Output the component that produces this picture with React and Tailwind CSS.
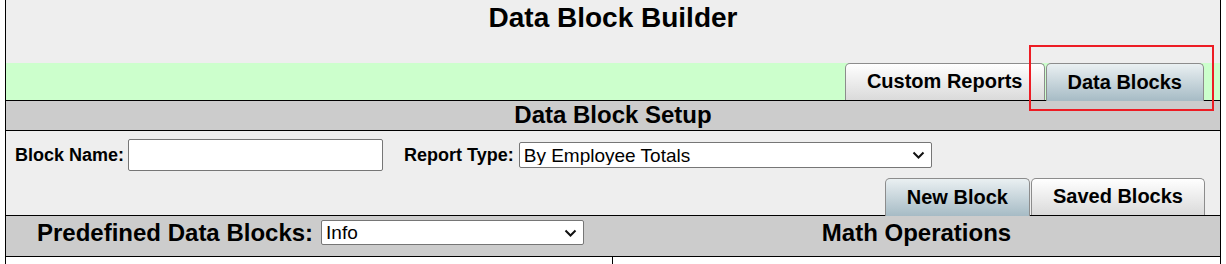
import React from 'react'

const Chevron = () => (
  <svg
    className="absolute right-[7px] top-1/2 -translate-y-1/2 pointer-events-none"
    width="13"
    height="8"
    viewBox="0 0 13 8"
    fill="none"
  >
    <path d="M1.5 1.5 L6.5 6.5 L11.5 1.5" stroke="#111" strokeWidth="2" />
  </svg>
)

const Tab = ({ label, active }) => (
  <div
    className={`flex items-center justify-center px-[21px] pb-[2px] border border-b-0 border-[#8c8c8c] rounded-t-[5px] text-[20px] font-bold text-black ${
      active
        ? 'h-[38px] -mb-px relative bg-gradient-to-b from-[#eaf0f2] to-[#a6bbc5]'
        : 'h-[37px] bg-gradient-to-b from-white to-[#dadada]'
    }`}
  >
    {label}
  </div>
)

const Select = ({ value, className }) => (
  <div className={`relative ${className}`}>
    <select
      defaultValue={value}
      className="w-full h-full appearance-none bg-white border border-[#767676] rounded-[2px] pl-[4px] pr-6 text-[19px] text-black leading-none outline-none"
    >
      <option>{value}</option>
    </select>
    <Chevron />
  </div>
)

export default function App() {
  return (
    <div className="w-[1226px] h-[264px] bg-white overflow-hidden font-['Liberation_Sans',Arial,sans-serif] text-black">
      <div className="ml-[5px] w-[1216px] h-[264px] border-x border-black">
        {/* Title */}
        <div className="h-[63px] bg-[#eeeeee] pt-[2px] text-center text-[28px] leading-[32px] font-bold">
          Data Block Builder
        </div>

        {/* Top tabs */}
        <div className="h-[38px] bg-[#ccffcc] border-b border-black flex items-end justify-end gap-[1px] pr-[16px]">
          <Tab label="Custom Reports" />
          <div className="relative">
            <Tab label="Data Blocks" active />
            <div className="absolute -left-[17px] -right-[10px] -top-[18px] -bottom-[11px] border-2 border-[#ed1c24] pointer-events-none" />
          </div>
        </div>

        {/* Section header */}
        <div className="h-[30px] bg-[#cccccc] border-b border-black text-center text-[24px] leading-[28px] font-bold">
          Data Block Setup
        </div>

        {/* Form area */}
        <div className="h-[85px] bg-[#eeeeee] border-b border-black flex flex-col">
          <div className="flex items-center pt-[8px] pl-[9px]">
            <span className="text-[18px] font-bold">Block Name:</span>
            <input
              type="text"
              className="ml-[4px] w-[255px] h-[32px] bg-white border border-[#767676] rounded-[2px] outline-none"
            />
            <span className="ml-[21px] text-[18px] font-bold">Report Type:</span>
            <Select value="By Employee Totals" className="ml-[5px] w-[413px] h-[26px]" />
          </div>
          <div className="mt-auto flex items-end justify-end gap-[1px] pr-[15px]">
            <Tab label="New Block" active />
            <Tab label="Saved Blocks" />
          </div>
        </div>

        {/* Columns header */}
        <div className="h-[41px] bg-[#cccccc] border-b border-black flex pt-[4px]">
          <div className="w-[607px] flex items-center h-[25px] pl-[31px]">
            <span className="text-[24px] leading-[25px] font-bold">Predefined Data Blocks:</span>
            <Select value="Info" className="ml-[8px] w-[263px] h-[25px]" />
          </div>
          <div className="flex-1 flex items-center justify-center h-[25px] text-[24px] leading-[25px] font-bold">
            Math Operations
          </div>
        </div>

        {/* Columns body */}
        <div className="flex h-[20px]">
          <div className="w-[607px] border-r border-black" />
          <div className="flex-1" />
        </div>
      </div>
    </div>
  )
}
